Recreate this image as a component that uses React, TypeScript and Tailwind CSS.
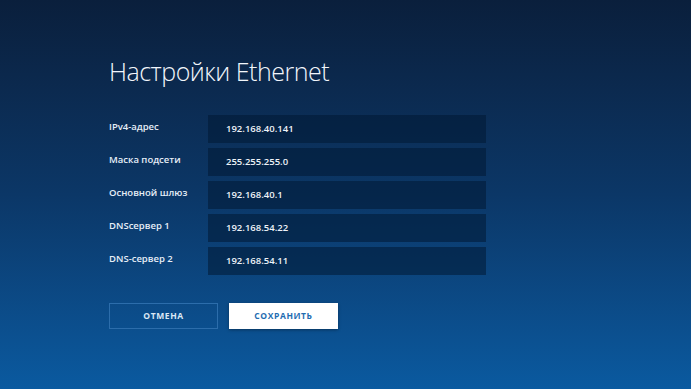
import React from "react";

const fields = [
  { label: "IPv4-адрес", value: "192.168.40.141" },
  { label: "Маска подсети", value: "255.255.255.0" },
  { label: "Основной шлюз", value: "192.168.40.1" },
  { label: "DNSсервер 1", value: "192.168.54.22" },
  { label: "DNS-сервер 2", value: "192.168.54.11" },
];

const App = () => {
  return (
    <div
      className="w-[691px] h-[389px] overflow-hidden bg-gradient-to-b from-[#0a1f3c] via-[#0b3767] to-[#0a5aa0] text-white"
      style={{ fontFamily: '"Open Sans", "Noto Sans", sans-serif' }}
    >
      <div className="pl-[109px] pt-[53px]">
        <h1 className="text-[25px] font-light leading-[36px] text-[#f2f6fb] tracking-[-0.5px]">
          Настройки Ethernet
        </h1>

        <div className="mt-[26px] flex flex-col gap-[5px]">
          {fields.map((f, i) => (
            <div key={i} className="flex items-center h-[28px]">
              <span className="w-[99px] text-[9.5px] font-semibold text-[#e6eef7] -mt-[3px]">
                {f.label}
              </span>
              <div className="w-[278px] h-full flex items-center pl-[18px] bg-[#001833]/55">
                <span className="text-[9.5px] font-semibold text-[#eef3f9]">{f.value}</span>
              </div>
            </div>
          ))}
        </div>

        <div className="mt-[28px] flex gap-[11px]">
          <button className="w-[109px] h-[26px] border border-[#2c6dab] text-[8.5px] font-bold tracking-[0.6px] text-[#dce8f5]">
            ОТМЕНА
          </button>
          <button className="w-[109px] h-[26px] bg-white text-[8.5px] font-bold tracking-[0.6px] text-[#1e6cb1] shadow-[0_1px_3px_rgba(0,0,0,0.35)]">
            СОХРАНИТЬ
          </button>
        </div>
      </div>
    </div>
  );
};

export default App;
